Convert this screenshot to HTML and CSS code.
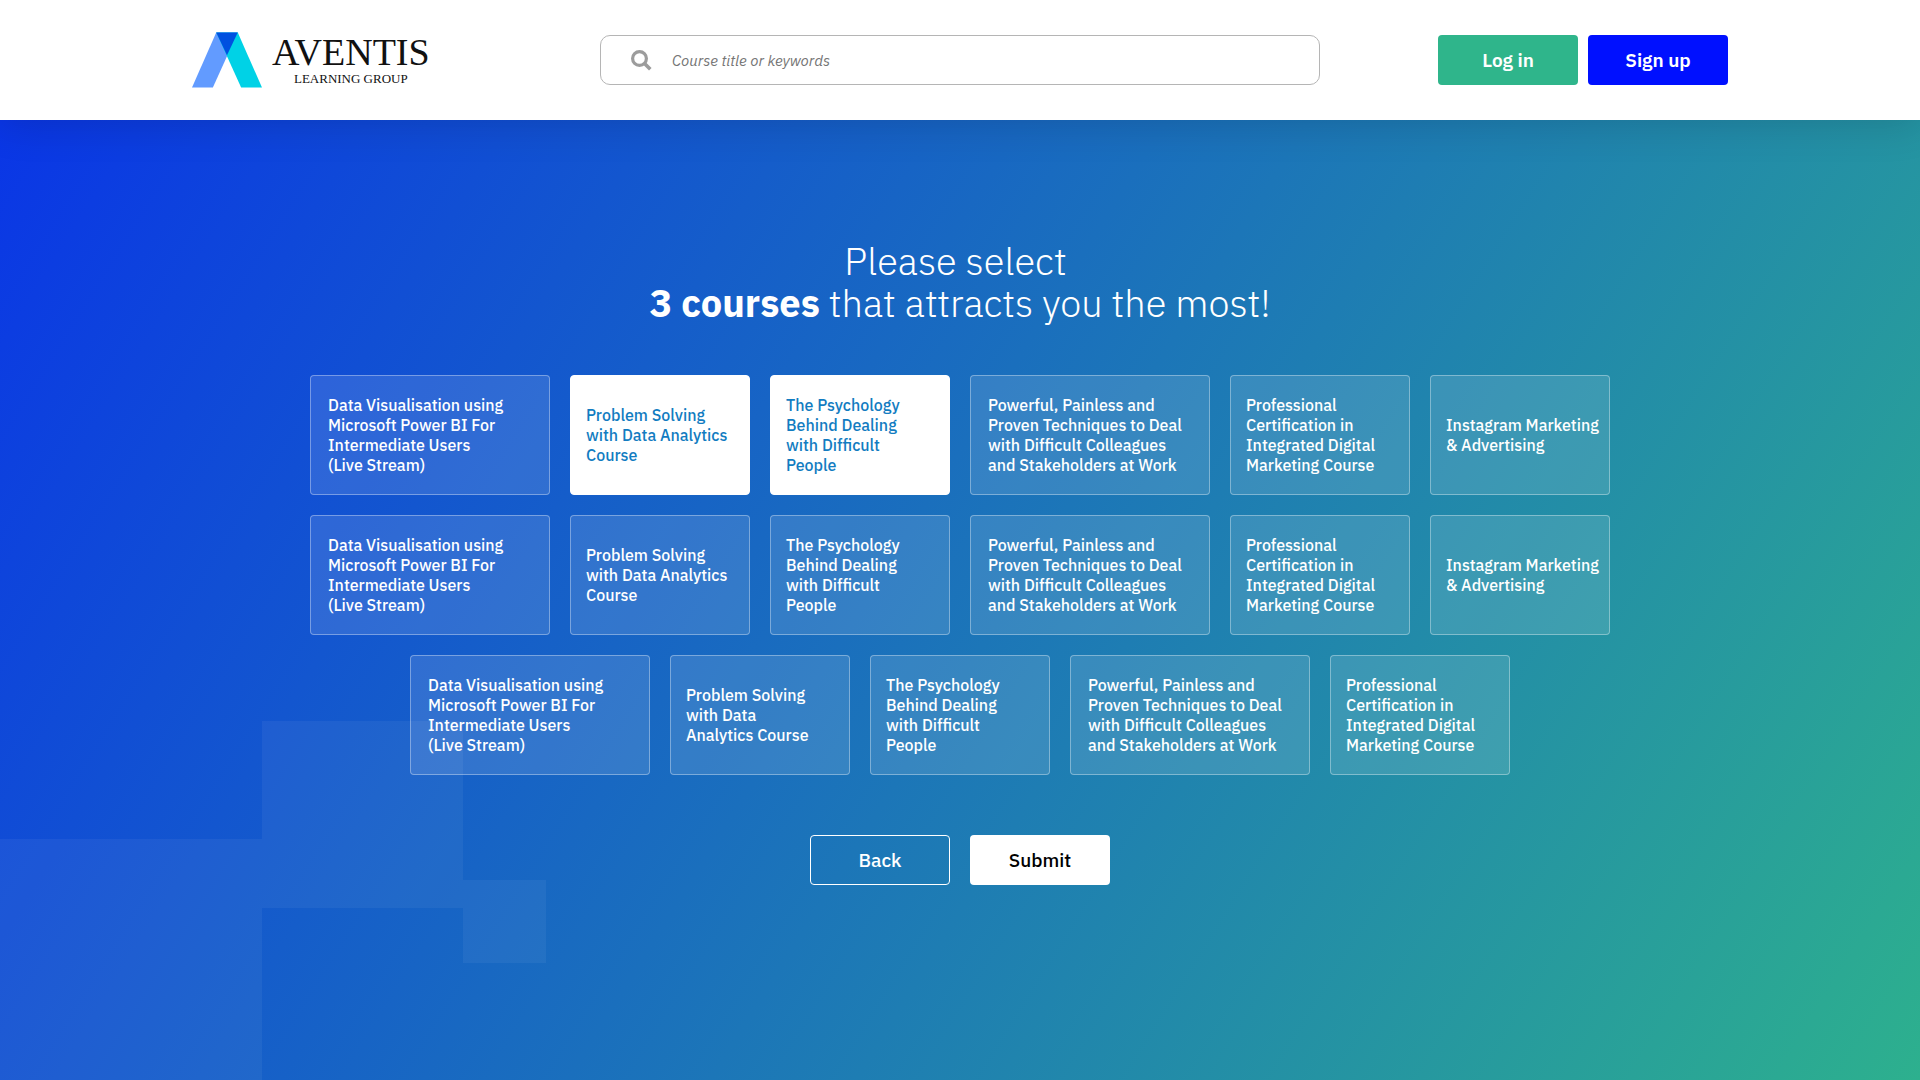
FILE: index.html
```html
<!DOCTYPE html>
<html lang="en">
<head>
  <meta charset="UTF-8">
  <meta name="viewport" content="width=device-width, initial-scale=1.0">
  <title>Aventis Learning Group</title>
  <link rel="stylesheet" href="styles.css">
</head>
<body>

  <header class="header">
    <a class="logo" href="#" aria-label="Aventis Learning Group">
      <svg class="logo-mark" viewBox="0 0 208 164" aria-hidden="true">
        <path fill="#629bff" d="M72 0h64L62 164H0z"/>
        <path fill="#00d2e6" d="M72 0h64l72 164h-62z"/>
        <path fill="#0050e0" d="M72 0h64l-32 68z"/>
      </svg>
      <span class="logo-text">
        <span class="logo-name">AVENTIS</span>
        <span class="logo-sub">LEARNING GROUP</span>
      </span>
    </a>

    <form class="search">
      <label for="search" aria-label="Search">
        <svg class="search-icon" viewBox="0 0 21 21" aria-hidden="true">
          <circle cx="8.5" cy="8.5" r="6.9" fill="none" stroke="#9c9c9c" stroke-width="3.2"/>
          <path d="M13.3 13.3l6 6" stroke="#9c9c9c" stroke-width="3.6"/>
        </svg>
      </label>
      <input id="search" type="search" placeholder="Course title or keywords">
    </form>

    <div class="auth">
      <button class="btn btn-login" type="button">Log in</button>
      <button class="btn btn-signup" type="button">Sign up</button>
    </div>
  </header>

  <main class="main">
    <div class="squares">
      <span class="square square-lg"></span>
      <span class="square square-md"></span>
      <span class="square square-sm"></span>
    </div>

    <form class="picker">
      <h1 class="title">Please select&nbsp;<br><strong>3 courses</strong> that attracts you the most!</h1>

      <div class="courses">
        <label class="course wide"><input type="checkbox"><span>Data Visualisation using<br>Microsoft Power BI For<br>Intermediate Users<br>(Live Stream)</span></label>
        <label class="course"><input type="checkbox" checked><span>Problem Solving<br>with Data Analytics<br>Course</span></label>
        <label class="course"><input type="checkbox" checked><span>The Psychology<br>Behind Dealing<br>with Difficult<br>People</span></label>
        <label class="course wide"><input type="checkbox"><span>Powerful, Painless and<br>Proven Techniques to Deal<br>with Difficult Colleagues<br>and Stakeholders at Work</span></label>
        <label class="course"><input type="checkbox"><span>Professional<br>Certification in<br>Integrated Digital<br>Marketing Course</span></label>
        <label class="course"><input type="checkbox"><span>Instagram Marketing<br>&amp; Advertising</span></label>

        <label class="course wide"><input type="checkbox"><span>Data Visualisation using<br>Microsoft Power BI For<br>Intermediate Users<br>(Live Stream)</span></label>
        <label class="course"><input type="checkbox"><span>Problem Solving<br>with Data Analytics<br>Course</span></label>
        <label class="course"><input type="checkbox"><span>The Psychology<br>Behind Dealing<br>with Difficult<br>People</span></label>
        <label class="course wide"><input type="checkbox"><span>Powerful, Painless and<br>Proven Techniques to Deal<br>with Difficult Colleagues<br>and Stakeholders at Work</span></label>
        <label class="course"><input type="checkbox"><span>Professional<br>Certification in<br>Integrated Digital<br>Marketing Course</span></label>
        <label class="course"><input type="checkbox"><span>Instagram Marketing<br>&amp; Advertising</span></label>

        <label class="course wide"><input type="checkbox"><span>Data Visualisation using<br>Microsoft Power BI For<br>Intermediate Users<br>(Live Stream)</span></label>
        <label class="course"><input type="checkbox"><span>Problem Solving<br>with Data<br>Analytics Course</span></label>
        <label class="course"><input type="checkbox"><span>The Psychology<br>Behind Dealing<br>with Difficult<br>People</span></label>
        <label class="course wide"><input type="checkbox"><span>Powerful, Painless and<br>Proven Techniques to Deal<br>with Difficult Colleagues<br>and Stakeholders at Work</span></label>
        <label class="course"><input type="checkbox"><span>Professional<br>Certification in<br>Integrated Digital<br>Marketing Course</span></label>
      </div>

      <div class="actions">
        <button class="btn btn-back" type="button">Back</button>
        <button class="btn btn-submit" type="submit">Submit</button>
      </div>
    </form>
  </main>

</body>
</html>
```
FILE: styles.css
```css
* { box-sizing: border-box; }

body {
  margin: 0;
  min-height: 100vh;
  display: flex;
  flex-direction: column;
  font-family: "IBM Plex Sans", Roboto, sans-serif;
  font-size: 16px;
  line-height: 20px;
}

/* header */
.header {
  position: relative;
  z-index: 1;
  display: grid;
  grid-template-columns: 1fr minmax(200px, 720px) 1fr;
  align-items: center;
  padding: 32px 10%;
  background: #fff;
  box-shadow: 0 4px 40px rgba(0, 0, 0, 0.15);
}
.logo {
  display: flex;
  align-items: center;
  gap: 10px;
  color: #111;
  text-decoration: none;
}
.logo-mark { width: 70px; height: 56px; }
.logo-text {
  display: flex;
  flex-direction: column;
  align-items: center;
  font-family: "Liberation Serif", serif;
}
.logo-name { font-size: 38px; line-height: 38px; }
.logo-sub { font-size: 13px; line-height: 16px; }

.search {
  display: flex;
  align-items: center;
  gap: 20px;
  height: 50px;
  padding: 0 30px;
  border: 1px solid #b5b5b5;
  border-radius: 10px;
}
.search-icon { display: block; width: 21px; height: 21px; }
.search input {
  flex: 1;
  min-width: 0;
  padding: 0;
  border: none;
  outline: none;
  background: none;
  font: italic 15px "IBM Plex Sans", Roboto, sans-serif;
}
.search input::placeholder { color: #757575; }

.auth {
  display: flex;
  justify-content: flex-end;
  gap: 10px;
}

.btn {
  width: 140px;
  height: 50px;
  border: 1px solid transparent;
  border-radius: 4px;
  font: 500 19px "IBM Plex Sans", Roboto, sans-serif;
  color: #fff;
  cursor: pointer;
}
.btn-login { background: #2fb58b; }
.btn-signup { background: #0010ff; }
.btn-login, .btn-signup { font-weight: 600; }
.btn-back { background: none; border-color: #fff; }
.btn-submit { background: #fff; color: #000; }

/* course picker */
.main {
  position: relative;
  flex: 1;
  padding: 120px 20px;
  background: linear-gradient(122deg, #0a36e6 0%, #1c76b8 52%, #2db08e 100%);
  color: #fff;
}
.picker {
  position: relative;
  display: flex;
  flex-direction: column;
  align-items: center;
}
.title {
  margin: 0;
  font-size: 38px;
  line-height: 42px;
  font-weight: 300;
  text-align: center;
}
.title strong { font-weight: 700; }

.courses {
  display: flex;
  flex-wrap: wrap;
  justify-content: center;
  gap: 20px;
  max-width: 1300px;
  margin: 51px 0 60px;
}
.course {
  display: flex;
  align-items: center;
  width: 180px;
  height: 120px;
  padding-left: 15px;
  border: 1px solid rgba(255, 255, 255, 0.35);
  border-radius: 4px;
  background: rgba(255, 255, 255, 0.12);
  font-weight: 500;
  white-space: nowrap;
  cursor: pointer;
}
.course.wide { width: 240px; padding-left: 17px; }
.course input { appearance: none; margin: 0; }
.course:has(:checked) {
  background: #fff;
  border-color: #fff;
  color: #127cc1;
}

.actions { display: flex; gap: 20px; }

/* decorative squares in the bottom left corner */
.squares {
  position: absolute;
  left: 0;
  bottom: 0;
  width: 546px;
  height: 359px;
}
.square { position: absolute; background: rgba(255, 255, 255, 0.05); }
.square-lg { left: 0; bottom: 0; width: 262px; height: 241px; }
.square-md { left: 262px; top: 0; width: 201px; height: 187px; }
.square-sm { right: 0; top: 159px; width: 83px; height: 83px; }
```
